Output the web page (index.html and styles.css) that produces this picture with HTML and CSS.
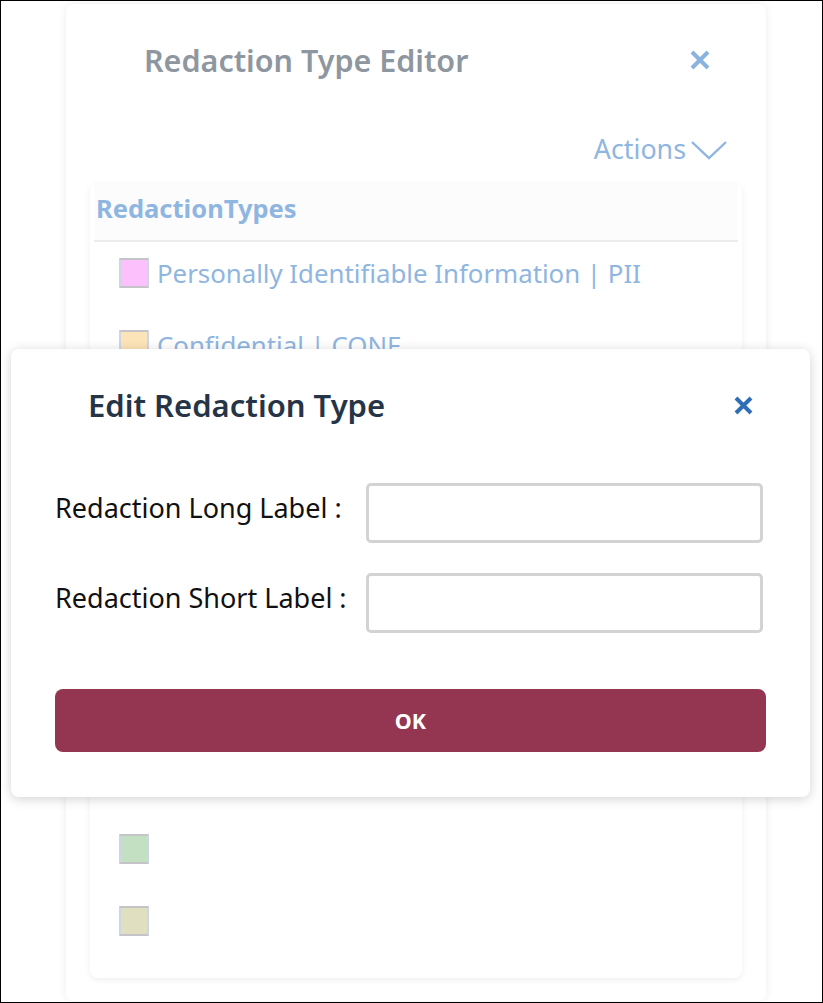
FILE: index.html
```html
<!DOCTYPE html>
<html lang="en">
<head>
    <meta charset="UTF-8">
    <meta name="viewport" content="width=device-width, initial-scale=1.0">
    <title>Redaction Type Editor</title>
    <link rel="stylesheet" href="styles.css">
</head>
<body>
<div class="frame">

    <!-- editor panel behind the dialog -->
    <div class="editor">
        <div class="editor-head">
            <h2 class="editor-title">Redaction Type Editor</h2>
            <svg class="x-icon" width="20" height="20" viewBox="0 0 20 20">
                <path d="M2 2 L18 18 M18 2 L2 18" stroke="#8ab4e0" stroke-width="4"/>
            </svg>
        </div>
        <div class="actions">
            <span>Actions</span>
            <svg class="chev" width="38" height="22" viewBox="0 0 38 22">
                <path d="M2 3 L19 19 L36 3" fill="none" stroke="#8fb6e1" stroke-width="2.4"/>
            </svg>
        </div>
        <div class="list">
            <div class="list-head">RedactionTypes</div>
            <div class="row"><span class="swatch pink"></span>Personally Identifiable Information | PII</div>
            <div class="row"><span class="swatch peach"></span>Confidential | CONF</div>
            <div class="row"><span class="swatch blue"></span>Privileged | PRIV</div>
            <div class="row"><span class="swatch grey"></span>Financial | FIN</div>
            <div class="row"><span class="swatch pink"></span>Medical | MED</div>
            <div class="row"><span class="swatch peach"></span>Legal | LEG</div>
            <div class="row"><span class="swatch blue"></span>Security | SEC</div>
            <div class="row"><span class="swatch grey"></span>Other | OTH</div>
            <div class="row"><span class="swatch green"></span></div>
            <div class="row"><span class="swatch khaki"></span></div>
        </div>
    </div>

    <!-- edit dialog -->
    <div class="dialog">
        <div class="dialog-head">
            <h2 class="dialog-title">Edit Redaction Type</h2>
            <svg class="x-icon dialog-close" width="19" height="19" viewBox="0 0 19 19">
                <path d="M2 2 L17 17 M17 2 L2 17" stroke="#2f6db5" stroke-width="4"/>
            </svg>
        </div>
        <div class="field field-first">
            <label for="longLabel">Redaction Long Label :</label>
            <input type="text" id="longLabel">
        </div>
        <div class="field">
            <label for="shortLabel">Redaction Short Label :</label>
            <input type="text" id="shortLabel">
        </div>
        <button class="ok">OK</button>
    </div>

</div>
</body>
</html>
```

FILE: styles.css
```css
* {
    box-sizing: border-box;
}

body {
    margin: 0;
    font-family: "Noto Sans", "Open Sans", sans-serif;
    background: #fff;
}

.frame {
    position: relative;
    width: 823px;
    height: 1003px;
    border: 1px solid #000;
    overflow: hidden;
}

/* editor */
.editor {
    width: 700px;
    height: 997px;
    margin: 3px 0 0 65px;
    background: #fff;
    border-radius: 8px;
    box-shadow: 0 0 8px rgba(0, 0, 0, 0.08);
    padding: 36px 24px 0 24px;
}

.editor-head {
    display: flex;
    align-items: center;
    justify-content: space-between;
    height: 40px;
    padding-left: 54px;
    padding-right: 32px;
}

.editor-title {
    margin: 0;
    font-size: 30.5px;
    font-weight: 600;
    color: #8e979f;
}

.actions {
    display: flex;
    align-items: center;
    justify-content: flex-end;
    gap: 4px;
    height: 34px;
    margin-top: 51px;
    padding-right: 14px;
    font-size: 26.8px;
    color: #8fb6e1;
}

.chev {
    margin-top: 4px;
}

.list {
    margin-top: 18px;
    height: 795px;
    border-radius: 8px;
    box-shadow: 0 2px 6px rgba(0, 0, 0, 0.07);
    padding: 0 4px;
}

.list-head {
    height: 59px;
    padding: 8px 2px 0;
    background: #fcfcfc;
    border-bottom: 2px solid #ececec;
    font-size: 25.5px;
    font-weight: 700;
    color: #8fb6e1;
}

.row {
    display: flex;
    align-items: center;
    gap: 8px;
    height: 72px;
    padding: 0 0 10px 25px;
    font-size: 25.8px;
    color: #8fb6e1;
}

.swatch {
    flex: none;
    width: 30px;
    height: 30px;
    border: 2px solid #c4c4c8;
    border-left-color: #cdd6e6;
    border-right-color: #cdd6e6;
}

.pink { background: #fcc0fc; }
.peach { background: #fde3b8; }
.blue { background: #c5dcf5; }
.grey { background: #dedede; }
.green { background: #c3e0c3; }
.khaki { background: #e0dfbf; }

/* dialog */
.dialog {
    position: absolute;
    left: 10px;
    top: 348px;
    width: 799px;
    height: 448px;
    background: #fff;
    border-radius: 8px;
    box-shadow: 0 2px 12px rgba(0, 0, 0, 0.18);
    padding: 36px 44px 0;
}

.dialog-head {
    display: flex;
    align-items: center;
    justify-content: space-between;
    height: 40px;
    padding-left: 33px;
}

.dialog-title {
    margin: 0;
    font-size: 31px;
    font-weight: 600;
    color: #263447;
}

.dialog-close {
    margin-right: 13px;
}

.field {
    display: flex;
    align-items: center;
    justify-content: space-between;
    margin-top: 30px;
    padding-right: 3px;
    font-size: 27px;
    color: #111;
}

.field label {
    margin-bottom: 12px;
}

.field-first {
    margin-top: 58px;
}

.field input {
    width: 397px;
    height: 60px;
    border: 3px solid #d3d3d3;
    border-radius: 5px;
    font-size: 22px;
    padding: 0 10px;
}

.ok {
    display: block;
    width: 711px;
    height: 63px;
    margin-top: 56px;
    border: 0;
    border-radius: 8px;
    background: #943651;
    color: #fff;
    font-family: "Noto Sans", "Open Sans", sans-serif;
    font-size: 21.5px;
    font-weight: 700;
    cursor: pointer;
}
```
